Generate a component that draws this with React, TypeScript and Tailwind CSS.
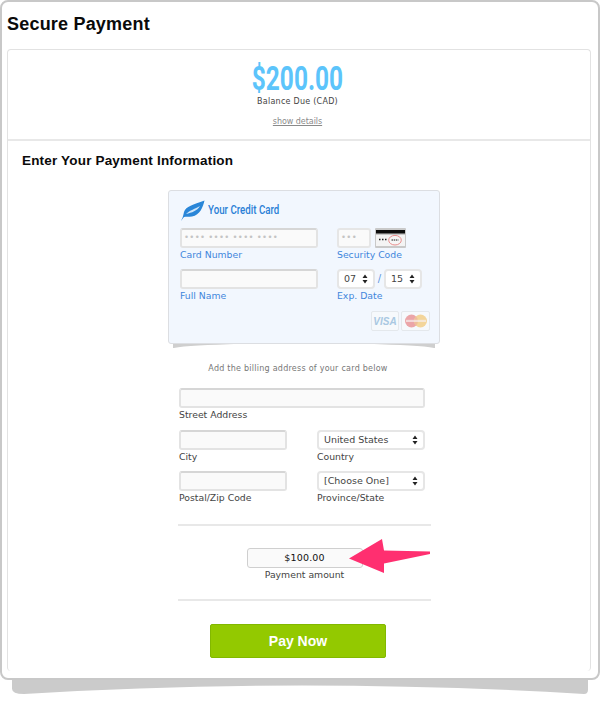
import React from "react";

const Stepper = () => (
  <svg viewBox="0 0 6 10" className="absolute right-[5px] top-[3px] w-[6px] h-[10px]" fill="#222">
    <path d="M3 0.5 L5.5 4 H0.5 Z M3 9.5 L5.5 6 H0.5 Z" />
  </svg>
);

const Select = ({ value, className }: { value: string; className: string }) => (
  <div className={`relative h-[20px] rounded-[4px] border-2 border-[#e6e6e6] bg-white text-[9.5px] leading-[16px] text-[#444] ${className}`}>
    {value}
    <Stepper />
  </div>
);

const Field = ({ label, className, labelClass }: { label: string; className: string; labelClass: string }) => (
  <div className={className}>
    <div className="h-[20px] rounded-[3px] border-2 border-[#e3e3e3] border-t-[#d6d6d6] bg-[#fafafa]" />
    <div className={`text-[9.3px] leading-[14px] ${labelClass}`}>{label}</div>
  </div>
);

export default function App() {
  return (
    <div className="relative h-[708px] w-[600px] overflow-hidden bg-white font-['DejaVu_Sans',sans-serif]">
      <svg viewBox="0 0 576 16" className="absolute left-[12px] top-[678px] h-[17px] w-[576px]" preserveAspectRatio="none" fill="#cbcbcb">
        <path d="M0 0 H576 V11 Q576 15 572 15 Q288 -1 12 15 Q0 15 0 10 Z" />
      </svg>
      <div className="relative h-[680px] overflow-hidden rounded-[8px] border-2 border-[#c8c8c8] bg-white pl-[5px] pr-[7px]">
        <h1 className="pt-[10px] font-['Liberation_Sans',sans-serif] text-[18px] font-bold leading-[24px] tracking-[0.2px] text-[#0a0a0a]">
          Secure Payment
        </h1>
        <div className="mt-[13px] h-[622px] overflow-hidden rounded-[4px] border border-b-0 border-[#e2e2e2] bg-white">
          <div className="flex h-[91px] flex-col items-center border-b-2 border-[#e8e8e8] pr-[3px]">
            <div className="mt-[10px] origin-center scale-x-[0.72] font-['Roboto',sans-serif] text-[34px] font-bold leading-[36px] text-[#5cc4fb]">
              $200.00
            </div>
            <div className="text-[8px] leading-[12px] tracking-[0.25px] text-[#444]">Balance Due (CAD)</div>
            <div className="mt-[8px] text-[8px] leading-[12px] tracking-[-0.05px] text-[#8a8a8a] underline">show details</div>
          </div>
          <h2 className="ml-[14px] mt-[11px] font-['Liberation_Sans',sans-serif] text-[13.5px] font-bold leading-[18px] tracking-[0.18px] text-[#0a0a0a]">
            Enter Your Payment Information
          </h2>

          <div className="relative ml-[160px] mt-[20px] h-[154px] w-[272px]">
            <div className="absolute bottom-[-4px] left-[5px] right-[5px] h-[8px] bg-[#cfcfcf]" />
            <div className="absolute bottom-[-6px] left-0 right-0 h-[7px] rounded-[50%/100%_100%_0_0] bg-white" />
            <div className="relative h-[154px] rounded-[3px] border border-[#dcdee2] bg-[#f2f7fe] pl-[11px] pr-[9px] pt-[9px]">
              <div className="flex h-[22px] items-center">
                <svg viewBox="0 0 25 22" className="h-[22px] w-[25px]">
                  <path d="M0.5 21.5 C3 18 3 16 4 12 C6 6 13 5 24.5 0.5 C23 7 20 15 12 16.5 C9 17 6 16.5 4 17 Z" fill="#2a86d8" />
                  <path d="M6 14 C10 10 15 9 20 6 C17 11 12 12.5 6 14 Z" fill="#cfe6fb" />
                </svg>
                <span className="ml-[3px] -mt-[3px] inline-block w-[72px] origin-left scale-x-[0.72] whitespace-nowrap font-['Roboto',sans-serif] text-[13.5px] font-medium text-[#2a7fd6]">
                  Your Credit Card
                </span>
              </div>
              <div className="mt-[6px] flex gap-[19px]">
                <div className="w-[138px]">
                  <div className="h-[20px] rounded-[3px] border-2 border-[#e3e3e3] border-t-[#d6d6d6] bg-[#fafafa] pl-[2px] text-[8.5px] leading-[15px] tracking-[0.3px] text-[#c4c4c4]">
                    •••• •••• •••• ••••
                  </div>
                  <div className="text-[9.3px] leading-[14px] text-[#3f86dc]">Card Number</div>
                </div>
                <div className="w-[85px]">
                  <div className="flex gap-[4px]">
                    <div className="h-[20px] w-[34px] rounded-[3px] border-2 border-[#e6e6e6] bg-[#fafafa] pl-[2px] text-[8.5px] leading-[15px] tracking-[0.3px] text-[#c4c4c4]">
                      •••
                    </div>
                    <svg viewBox="0 0 31 20" className="h-[20px] w-[31px]">
                      <rect width="31" height="20" rx="1" fill="#c9c9c9" />
                      <rect x="1" y="2" width="29" height="3.5" fill="#0c0c0c" />
                      <rect x="1" y="7" width="29" height="11" fill="#f4f4f4" />
                      <path d="M4 11.5h1.5M7 11.5h1.5M10 11.5h1.5" stroke="#222" strokeWidth="1.4" />
                      <ellipse cx="20" cy="12.2" rx="6.3" ry="4.8" fill="#f6f6f6" stroke="#e88d8d" />
                      <path d="M16.5 12h7" stroke="#888" strokeWidth="2" strokeDasharray="1.5 .7" />
                    </svg>
                  </div>
                  <div className="whitespace-nowrap text-[9.3px] leading-[14px] text-[#3f86dc]">Security Code</div>
                </div>
              </div>
              <div className="mt-[7px] flex gap-[19px]">
                <Field label="Full Name" className="w-[138px]" labelClass="text-[#3f86dc]" />
                <div className="w-[85px]">
                  <div className="flex items-center">
                    <Select value="07" className="w-[38px] pl-[5px]" />
                    <span className="w-[9px] text-center text-[10px] leading-[16px] text-[#5b93dc]">/</span>
                    <Select value="15" className="w-[38px] pl-[5px]" />
                  </div>
                  <div className="text-[9.3px] leading-[14px] text-[#3f86dc]">Exp. Date</div>
                </div>
              </div>
              <div className="mt-[8px] flex justify-end gap-[2px]">
                <div className="flex h-[20px] w-[28px] items-center justify-center rounded-[2px] border border-[#e4e8ec] bg-[#f6f9fc] font-['Liberation_Sans',sans-serif] text-[10px] font-bold italic text-[#a9c8e2]">
                  VISA
                </div>
                <div className="flex h-[20px] w-[29px] items-center justify-center rounded-[2px] border border-[#e4e8ec] bg-[#f6f9fc]">
                  <svg viewBox="0 0 24 14" className="h-[14px] w-[24px]">
                    <circle cx="7.5" cy="7" r="6.5" fill="#eba5a8" />
                    <circle cx="16.5" cy="7" r="6.5" fill="#f3d59a" />
                    <path d="M12 2.3a6.5 6.5 0 0 1 0 9.4a6.5 6.5 0 0 1 0-9.4Z" fill="#efbd9c" />
                    <rect x="2" y="5.8" width="20" height="2.2" fill="#f7eeee" opacity="0.7" />
                  </svg>
                </div>
              </div>
            </div>
          </div>

          <div className="ml-[170px] mt-[19px] w-[253px]">
            <div className="pr-[13px] text-center text-[8px] leading-[12px] tracking-[0.25px] text-[#777]">
              Add the billing address of your card below
            </div>
            <div className="ml-[1px] mt-[13px] w-[246px]">
              <Field label="Street Address" className="w-[246px]" labelClass="text-[#444]" />
              <div className="mt-[8px] flex gap-[30px]">
                <Field label="City" className="w-[108px]" labelClass="text-[#444]" />
                <div className="w-[108px]">
                  <Select value="United States" className="pl-[5px]" />
                  <div className="text-[9.3px] leading-[14px] text-[#444]">Country</div>
                </div>
              </div>
              <div className="mt-[7px] flex gap-[30px]">
                <Field label="Postal/Zip Code" className="w-[108px]" labelClass="text-[#444]" />
                <div className="w-[108px]">
                  <Select value="[Choose One]" className="pl-[5px]" />
                  <div className="text-[9.3px] leading-[14px] text-[#444]">Province/State</div>
                </div>
              </div>
            </div>
            <div className="mt-[19px] border-t-2 border-[#e8e8e8]" />
            <div className="mt-[22px] flex flex-col items-center">
              <div className="h-[20px] w-[116px] rounded-[3px] border border-[#cfcfcf] bg-[#fafafa] text-center text-[9.5px] leading-[18px] tracking-[0.2px] text-[#111]">
                $100.00
              </div>
              <div className="text-[9.3px] leading-[14px] text-[#444]">Payment amount</div>
            </div>
            <div className="mt-[17px] border-t-2 border-[#e8e8e8]" />
            <div className="ml-[32px] mt-[23px] flex h-[34px] w-[176px] items-center justify-center rounded-[2px] border border-[#82b800] bg-[#93c900] font-['Liberation_Sans',sans-serif] text-[14px] font-bold text-white">
              Pay Now
            </div>
            <div className="ml-[39px] mt-[13px] h-[1px] w-[3px] bg-[#b5b5b5]" />
          </div>
        </div>
      </div>
      <svg viewBox="0 0 84 36" className="absolute left-[348px] top-[538px] h-[36px] w-[84px]">
        <path d="M1 20.5 L34 1 L36 12.5 L82 13.5 L82 16 L36 25.5 L36 35 Z" fill="#ff2f70" />
      </svg>
    </div>
  );
}
